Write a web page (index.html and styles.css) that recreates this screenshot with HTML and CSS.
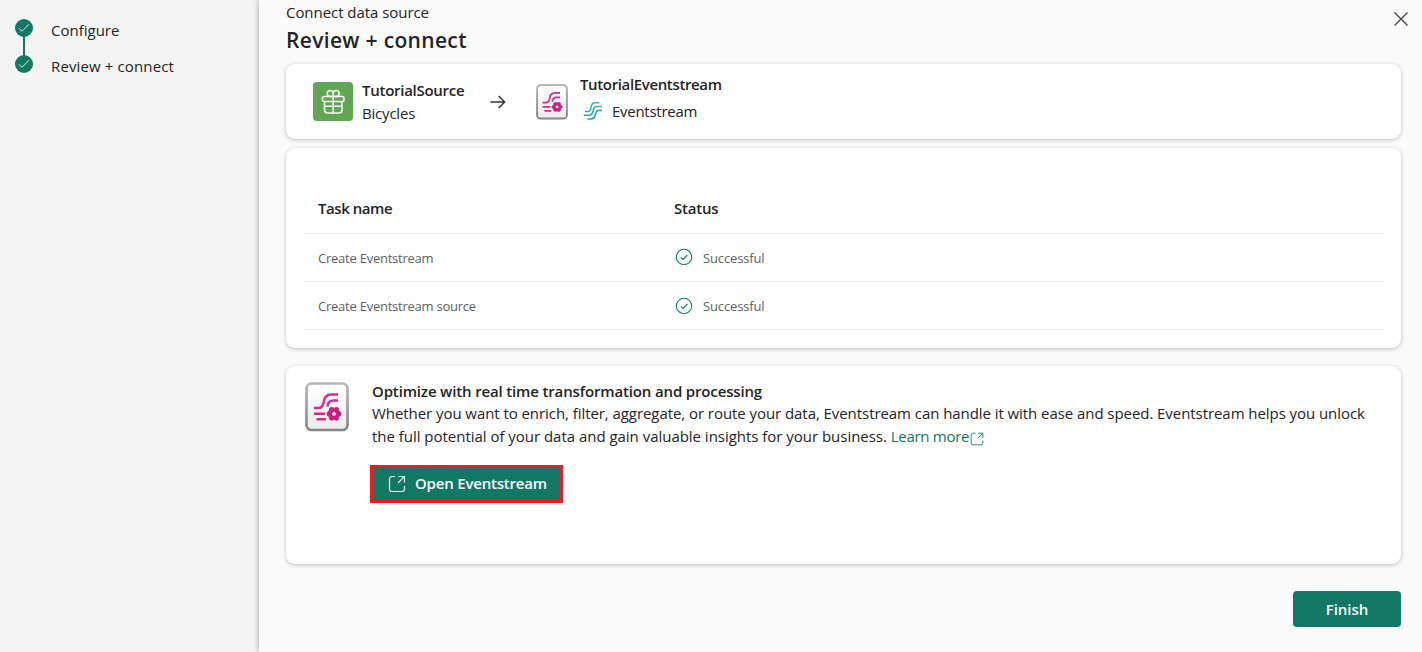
FILE: index.html
```
<!DOCTYPE html>
<html lang="en">
<head>
<meta charset="utf-8">
<title>Connect data source</title>
<link rel="stylesheet" href="styles.css">
</head>
<body>
<svg class="defs" width="0" height="0" aria-hidden="true">
  <defs>
    <linearGradient id="tile-fill" x1="0" y1="0" x2="0" y2="1"><stop offset="0" stop-color="#ffffff"/><stop offset="1" stop-color="#ebebeb"/></linearGradient>
    <linearGradient id="tile-edge" x1="0" y1="0" x2="0" y2="1"><stop offset="0" stop-color="#b8b8b8"/><stop offset="1" stop-color="#858585"/></linearGradient>
    <linearGradient id="stream-teal" gradientUnits="userSpaceOnUse" x1="0" y1="0" x2="0" y2="20"><stop offset="0" stop-color="#3fc98d"/><stop offset="1" stop-color="#1c9dae"/></linearGradient>
    <symbol id="tile" viewBox="0 0 44 50">
      <rect x="1.500" y="1.500" width="41" height="46.500" rx="5" fill="url(#tile-fill)" stroke="url(#tile-edge)" stroke-width="2.700"/>
      <g fill="none" stroke="#d52b8b" stroke-width="2.500">
        <path d="M9 26h4.500c3.500 0 4.500-2 5.200-6 .8-5.500 3-7.600 7.300-7.600h7"/>
        <path d="M22.500 24.500c.3-4 2.500-6 6-6H33"/>
        <path d="M9 31.700h11M11.500 37.300h9.500"/>
      </g>
      <path d="M26.400 25.200l2.600 1 2.600-1 1.900 1.100.4 2.700 2.100 1.700v2.200l-2.100 1.700-.4 2.700-1.900 1.100-2.600-1-2.600 1-1.900-1.100-.4-2.700-2.100-1.700v-2.200l2.100-1.700.4-2.700z" fill="#c62180" stroke="#c62180" stroke-width=".8"/>
      <circle cx="29" cy="31.800" r="1.900" fill="#f7edf3"/>
    </symbol>
    <symbol id="success" viewBox="0 0 18 18"><circle cx="9" cy="9" r="7.700"/><path d="M5.800 9.300l2.200 2.100 4.400-4.400"/></symbol>
    <symbol id="open" viewBox="0 0 18 18"><path d="M7 1.500H4A2.500 2.500 0 0 0 1.500 4v10A2.500 2.500 0 0 0 4 16.500h10a2.500 2.500 0 0 0 2.500-2.500v-3M10.500 1.500h6v6M16.300 1.700L10 8"/></symbol>
  </defs>
</svg>
<div class="app">
  <nav class="sidebar">
    <svg class="steps-rail" width="20" height="58" viewBox="0 0 20 58">
      <path d="M10 9v40" stroke="#117865" stroke-width="2"/>
      <circle cx="10" cy="10" r="9" fill="#117865"/><circle cx="10" cy="46" r="9" fill="#117865"/>
      <path d="M5 10.300l3 3 7-7M5 46.300l3 3 7-7" fill="none" stroke="#d6ebe5"/>
    </svg>
    <div class="steps"><span class="step">Configure</span><span class="step t-review">Review + connect</span></div>
  </nav>
  <main class="main">
    <header class="header">
      <div><div class="eyebrow">Connect data source</div><h1 class="title">Review + connect</h1></div>
      <svg class="close" width="16" height="16" viewBox="0 0 16 16"><path d="M1.500 1.500l13 13M14.500 1.500l-13 13" fill="none" stroke="#424242" stroke-width="1.300"/></svg>
    </header>
    <section class="card flow">
      <svg class="gift" width="40" height="39" viewBox="0 0 40 39">
        <rect width="40" height="39" rx="4" fill="#60a655"/>
        <g fill="none" stroke="#f2f8f0" stroke-width="1.600"><rect x="9.500" y="14.500" width="21.500" height="5" rx="1.500"/><path d="M11.500 19.500V28a3 3 0 0 0 3 3h11.500a3 3 0 0 0 3-3v-8.500M20.200 12v19M11.500 24.200h17.500M20.200 14.500h-3.200a3 3 0 1 1 3.200-3.200zM20.200 14.500h3.200a3 3 0 1 0-3.200-3.200z"/></g>
      </svg>
      <div class="source"><div class="name t-source">TutorialSource</div><div class="kind t-bicycles">Bicycles</div></div>
      <svg class="arrow" width="16" height="14" viewBox="0 0 16 14"><path d="M.5 7h14M8.700 1l6 6-6 6" fill="none" stroke="#303030" stroke-width="1.400"/></svg>
      <svg class="tile-small" width="32" height="36" viewBox="0 0 44 50" preserveAspectRatio="none"><use href="#tile" width="44" height="50"/></svg>
      <div class="target">
        <div class="name t-target">TutorialEventstream</div>
        <div class="kind stream"><svg width="20" height="20" viewBox="0 0 20 20"><path d="M2 10.500h3c2 0 2.600-1.300 3-4C8.500 3 9.700 1.800 12 1.800h4.500M1 14.300h4.500c3.300 0 4.300-1.800 4.800-5.200.4-2.600 1.300-3.600 3.500-3.600H19M4.500 18h3c3.300 0 4.500-2 5-5 .4-2.700 1.200-3.600 3.200-3.600H19" fill="none" stroke="url(#stream-teal)" stroke-width="1.600"/></svg><span class="t-stream">Eventstream</span></div>
      </div>
    </section>
    <section class="card tasks">
      <div class="row head"><span class="t-task">Task name</span><span class="t-status">Status</span></div>
      <div class="row"><span>Create Eventstream</span><span class="status"><svg class="raised" width="18" height="18"><use href="#success"/></svg><span class="t-ok">Successful</span></span></div>
      <div class="row"><span>Create Eventstream source</span><span class="status"><svg width="18" height="18"><use href="#success"/></svg><span class="t-ok">Successful</span></span></div>
    </section>
    <section class="card promo">
      <svg class="tile-large" width="44" height="50"><use href="#tile"/></svg>
      <div class="promo-body">
        <h2 class="promo-title">Optimize with real time transformation and processing</h2>
        <p class="copy">Whether you want to enrich, filter, aggregate, or route your data, Eventstream can handle it with ease and speed. Eventstream helps you unlock<br><span class="t-line2">the full potential of your data and gain valuable insights for your business. </span><a class="link">Learn more</a><svg class="link-icon" width="14" height="14" viewBox="0 0 18 18"><use href="#open"/></svg></p>
        <button class="open-btn"><svg width="18" height="18"><use href="#open"/></svg><span class="t-open">Open Eventstream</span></button>
      </div>
    </section>
    <footer class="footer"><button class="finish">Finish</button></footer>
  </main>
</div>
</body>
</html>
```
FILE: styles.css
```
* { box-sizing: border-box; }
body { margin: 0; font: 15px/22px "Open Sans", "Noto Sans", sans-serif; color: #242424; }
.defs { display: block; height: 0; }
.app { display: flex; height: 652px; overflow: hidden; background: #f4f4f4; }
.sidebar { width: 259px; flex: none; display: flex; padding: 18px 0 0 14px; }
.steps-rail { flex: none; margin-right: 17px; }
.steps { display: flex; flex-direction: column; gap: 14px; padding-top: 1px; }
.step { height: 22px; white-space: nowrap; }
.t-review { letter-spacing: .13px; }
.main { flex: 1; display: flex; flex-direction: column; padding: 1px 21px 0 27px; background: #fafafa; box-shadow: 0 0 6px rgba(0,0,0,.34); }
.header { display: flex; justify-content: space-between; height: 63px; }
.eyebrow { height: 22px; letter-spacing: -.05px; }
.title { margin: 2px 0 0; font-size: 21px; line-height: 30px; font-weight: 600; letter-spacing: .33px; }
.close { margin: 10px -8px 0 0; }
.card { flex: none; background: #fff; border-radius: 9px; box-shadow: 0 1px 4px rgba(0,0,0,.23); white-space: nowrap; }
.flow { height: 75px; display: flex; padding-left: 27px; }
.gift { margin-top: 18px; }
.source { width: 128px; margin-left: 9px; padding-top: 15px; }
.source .kind { margin-top: 1px; }
.name { font-weight: 600; }
.t-source { letter-spacing: -.27px; }
.t-bicycles { letter-spacing: -.2px; }
.t-target { letter-spacing: -.36px; }
.t-stream { letter-spacing: -.27px; }
.arrow { margin-top: 31px; }
.tile-small { margin: 20px 0 0 30px; }
.target { margin-left: 12px; padding-top: 9px; }
.stream { display: flex; align-items: center; margin-top: 5px; padding-left: 3px; gap: 9px; }
.tasks { height: 200px; margin-top: 9px; padding: 37px 18px 0; }
.row { height: 48px; display: grid; grid-template-columns: 356px 1fr; align-items: center; padding-left: 14px; border-bottom: 1px solid #ededed; font-size: 13px; color: #616161; letter-spacing: -.24px; }
.row.head { height: 49px; padding-bottom: 2px; font-size: 15px; font-weight: 600; color: #242424; }
.t-task { letter-spacing: -.44px; }
.t-status { letter-spacing: -.2px; }
.t-ok { letter-spacing: -.14px; }
.status { display: flex; align-items: center; gap: 10px; padding-left: 1px; }
.status svg { fill: none; stroke: #117865; stroke-width: 1.1; }
.status .raised { margin-bottom: 2px; }
.promo { height: 198px; margin-top: 18px; display: flex; padding: 14px 0 0 19px; }
.tile-large { margin-top: 2px; }
.promo-body { margin-left: 23px; }
.promo-title { margin: 0; font-size: 15px; line-height: 22px; font-weight: 600; letter-spacing: -.15px; }
.copy { margin: 0; height: 46px; line-height: 23px; letter-spacing: -.063px; }
.t-line2 { letter-spacing: -.025px; }
.link { color: #117865; letter-spacing: -.29px; }
.link-icon { margin: 0 0 -4px 1px; fill: none; stroke: #117865; stroke-width: 1.1; }
button { font: 600 15px/22px "Open Sans", "Noto Sans", sans-serif; color: #fff; background: #117865; white-space: nowrap; }
.open-btn { display: flex; align-items: center; gap: 9px; width: 193px; height: 38px; margin: 17px 0 0 -2px; padding: 0 0 0 15px; border: 3px solid #ed1c24; }
.open-btn svg { fill: none; stroke: #e4f2ee; stroke-width: 1.2; }
.t-open { padding-bottom: 2px; letter-spacing: -.2px; }
.footer { display: flex; justify-content: flex-end; margin-top: 27px; }
.finish { width: 108px; height: 36px; padding: 0; border: 0; border-radius: 4px; }
```
